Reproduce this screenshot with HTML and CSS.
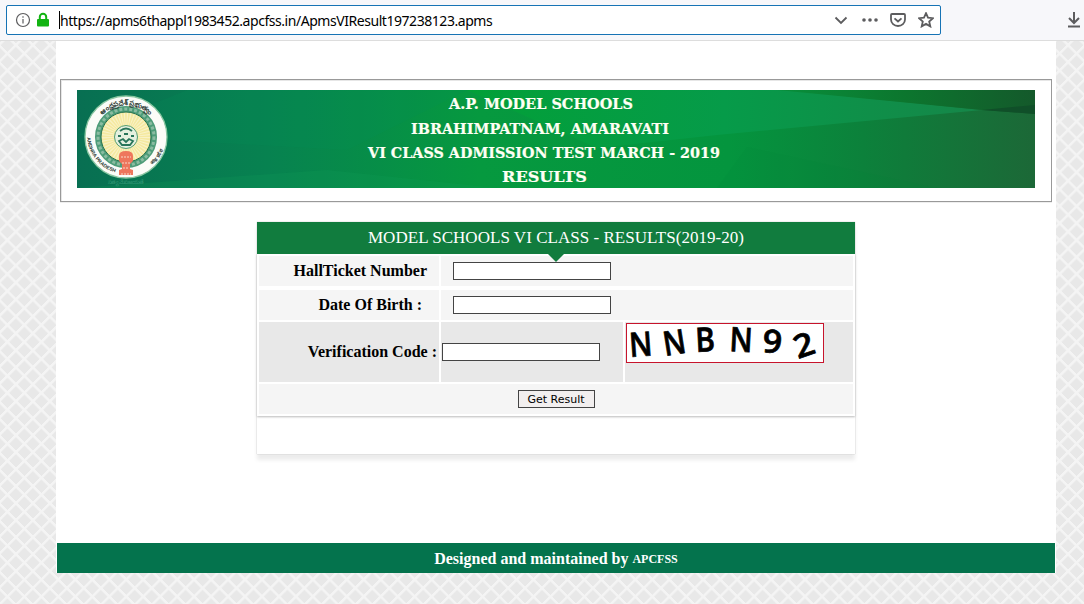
FILE: index.html
```html
<!DOCTYPE html>
<html lang="en">
<head>
<meta charset="utf-8">
<title>Model Schools Results</title>
<link rel="stylesheet" href="styles.css">
</head>
<body>
<header class="toolbar">
  <div class="address">
    <svg class="icon info" viewBox="0 0 16 16"><circle cx="8" cy="8" r="6.5"/><path d="M8 7v4.5M8 4.2v1.6"/></svg>
    <svg class="icon lock" viewBox="0 0 16 16"><path class="shackle" d="M4.8 8V5a3.2 3.2 0 0 1 6.4 0v3"/><rect x="2" y="7" width="12" height="7.6" rx="1"/></svg>
    <span class="caret"></span>
    <span class="url">https://apms6thappl1983452.apcfss.in/ApmsVIResult197238123.apms</span>
    <span class="actions">
      <svg class="icon" viewBox="0 0 16 16"><path d="M1.500 5.500 7 11l5.500-5.500"/></svg>
      <svg class="icon dots" viewBox="0 0 16 16"><circle cx="2" cy="8" r="1.800"/><circle cx="8" cy="8" r="1.800"/><circle cx="14" cy="8" r="1.800"/></svg>
      <svg class="icon" viewBox="0 0 16 16"><path d="M2 2h12q1 0 1 1v4.500a7 6.500 0 0 1-14 0V3q0-1 1-1zM4.500 6.300 8 9.500l3.500-3.200"/></svg>
      <svg class="icon" viewBox="0 0 16 16"><path d="m8 1.200 2 4.500 4.900.5-3.700 3.300 1.100 4.900L8 11.900l-4.300 2.500 1.100-4.900L1.100 6.200 6 5.700z"/></svg>
    </span>
  </div>
  <svg class="icon download" viewBox="0 0 16 16"><path d="M8 0v10.500M3 6l5 5 5-5M2 14.500h12"/></svg>
</header>
<main class="page">
  <div class="frame">
    <div class="banner">
      <svg class="facets" viewBox="0 0 958 98" preserveAspectRatio="none">
        <defs>
          <linearGradient id="base"><stop offset="0" stop-color="#086f52"/><stop offset=".2" stop-color="#078250"/><stop offset=".42" stop-color="#06993f"/><stop offset=".68" stop-color="#04953e"/><stop offset=".82" stop-color="#0c813b"/><stop offset="1" stop-color="#1c6837"/></linearGradient>
          <linearGradient id="light"><stop offset="0" stop-color="#02a038"/><stop offset=".5" stop-color="#069b49"/><stop offset="1" stop-color="#168649"/></linearGradient>
          <linearGradient id="dark"><stop offset="0" stop-color="#088f3b"/><stop offset=".5" stop-color="#0c762e"/><stop offset="1" stop-color="#14592b"/></linearGradient>
        </defs>
        <rect width="958" height="98" fill="url(#base)"/>
        <path d="M390 0H710L905 20 640 45 520 58z" fill="url(#light)"/>
        <path d="M700 0H958V24L905 20z" fill="url(#dark)"/>
        <path d="M905 20 958 15v9z" fill="#104f29"/>
        <path d="M0 45 270 60 390 0H110z" fill="#03925b" opacity=".18"/>
        <path d="M0 98 250 80 420 98z" fill="#16a05b" opacity=".2"/>
        <path d="M670 57 860 98H640z" fill="#03803a" opacity=".12"/>
      </svg>
      <svg class="seal" viewBox="0 0 84 96">
        <defs>
          <path id="arcTop" d="M9 43a33 33 0 0 1 66 0"/>
          <path id="arcLeft" d="M3 41a39 39 0 0 0 31 37"/>
          <path id="arcRight" d="M61 75a37 37 0 0 0 20-36"/>
        </defs>
        <circle cx="42" cy="42" r="41" fill="#fbfcf8" stroke="#89c6a1" stroke-width="1.300"/>
        <circle cx="42" cy="42" r="28" fill="#edf3df" stroke="#4d9c78" stroke-width="6"/>
        <circle cx="42" cy="42" r="28" fill="none" stroke="#8abca1" stroke-width="3" stroke-dasharray="3 2"/>
        <circle cx="42" cy="42" r="25" fill="#f5e9a0" stroke="#206e4d"/>
        <circle cx="42" cy="42" r="18" fill="none" stroke="#f9f2c8" stroke-width="12" stroke-dasharray="1 1.500"/>
        <circle cx="42" cy="42" r="11.500" fill="#e5f0df" stroke="#549d73"/>
        <path d="M36 36q6-5 12 0M34 41h3m3-2h4m3 2h3M35 46l4-2 3 3 3-3 4 2-3 4h-8z" fill="none" stroke="#28755a" stroke-width="1.800"/>
        <path d="M35 61q0-5 7-5t7 5v5l-3 3v5l3 1v5H35v-5l3-1v-5l-3-3z" fill="#ee765c"/>
        <path d="M37 62h10M38 68h8M39 73h6M37 79h10" stroke="#f8d9c7" stroke-width="1" stroke-dasharray="2 1"/>
        <text class="telugu"><textPath href="#arcTop" startOffset="24%" textLength="54">ఆంధ్రప్రదేశ్ ప్రభుత్వం</textPath></text>
        <text class="latin"><textPath href="#arcLeft" startOffset="3%">ANDHRA PRADESH</textPath></text>
        <text class="latin"><textPath href="#arcRight" startOffset="20%">आंध्र प्रदेश</textPath></text>
        <text class="motto" x="24" y="89" textLength="36">సత్యమేవ జయతే</text>
      </svg>
      <svg class="titles" viewBox="0 0 958 98">
        <text x="372" y="19" textLength="184" lengthAdjust="spacingAndGlyphs">A.P. MODEL SCHOOLS</text>
        <text x="334" y="44" textLength="258" lengthAdjust="spacingAndGlyphs">IBRAHIMPATNAM, AMARAVATI</text>
        <text x="291" y="68" textLength="352" lengthAdjust="spacingAndGlyphs">VI CLASS ADMISSION TEST MARCH - 2019</text>
        <text x="425" y="92" textLength="85" lengthAdjust="spacingAndGlyphs">RESULTS</text>
      </svg>
    </div>
  </div>
  <section class="card">
    <h1 class="card-title">MODEL SCHOOLS VI CLASS - RESULTS(2019-20)</h1>
    <form class="form">
      <label class="cell name first hall">HallTicket Number</label>
      <div class="cell wide first inset"><input class="field" type="text"></div>
      <label class="cell name birth">Date Of Birth :</label>
      <div class="cell wide inset"><input class="field" type="text"></div>
      <label class="cell name shade">Verification Code :</label>
      <div class="cell shade answer"><input class="field" type="text"></div>
      <div class="cell shade code">
        <svg class="captcha" viewBox="0 0 196 38">
          <text transform="translate(3 33) rotate(-4) scale(.92 1.050)">N</text>
          <text transform="translate(38 32) rotate(-9) scale(.9 1.050)">N</text>
          <text transform="translate(69 28) rotate(-3) scale(.92 1.050)">B</text>
          <text transform="translate(102 27) rotate(3) scale(.92 1.050)">N</text>
          <text transform="translate(135 28) rotate(4) scale(1.060 1)">9</text>
          <text transform="translate(171 35) rotate(-19) scale(1.100 1)">2</text>
        </svg>
      </div>
      <div class="cell full"><button class="submit" type="button">Get Result</button></div>
    </form>
  </section>
  <footer class="footer"><span class="credit">Designed and maintained by</span><span class="owner">APCFSS</span></footer>
</main>
</body>
</html>
```
FILE: styles.css
```css
* { box-sizing: border-box; }
body {
  margin: 0;
  height: 604px;
  overflow: hidden;
  font-family: "Liberation Serif", serif;
  color: #000;
  background-color: #e8e8e8;
  background-image:
    repeating-linear-gradient(45deg, transparent 0 8.500px, #f4f4f4 10px 11.500px, transparent 12px),
    repeating-linear-gradient(-45deg, transparent 0 8.500px, #f4f4f4 10px 11.500px, transparent 12px);
}
.toolbar {
  height: 41px;
  padding: 5px 0 0 6px;
  display: flex;
  background: #f7f7fa;
  border-bottom: 1px solid #ddd;
}
.address {
  width: 935px;
  height: 30px;
  border: 1px solid #1673b5;
  border-radius: 2px;
  background: #fff;
  display: flex;
  align-items: center;
  padding: 0 6px 0 8px;
}
.icon {
  width: 16px;
  height: 16px;
  flex: none;
  fill: none;
  stroke: #5c5c5e;
  stroke-width: 1.800;
}
.info { stroke-width: 1.200; }
.lock { margin-left: 4px; fill: #12b312; stroke: none; }
.shackle { fill: none; stroke: #12b312; stroke-width: 2; }
.dots { fill: #5c5c5e; stroke: none; }
.caret { width: 1px; height: 18px; margin-left: 8px; background: #000; }
.url {
  width: 433px;
  padding-top: 2px;
  white-space: nowrap;
  font: 14px/18px "Noto Sans", sans-serif;
  letter-spacing: -0.450px;
}
.actions { display: flex; gap: 12px; margin-left: auto; }
.download { margin: 7px 0 0 125px; stroke-width: 2; }
.page {
  width: 1000px;
  height: 533px;
  margin-left: 56px;
  padding: 38px 1px 0 4px;
  background: linear-gradient(#fff, #fff) 0 0 / 100% 532px no-repeat;
}
.frame {
  width: 992px;
  height: 123px;
  border: 1px solid #999;
  box-shadow: inset 1px 1px #e6e6e6, 0 1px #eee;
  padding: 10px 16px;
}
.banner { width: 958px; height: 98px; display: grid; }
.facets, .titles, .seal { grid-area: 1 / 1; }
.facets, .titles { width: 958px; height: 98px; }
.titles {
  fill: #fffff4;
  stroke: #fffff4;
  stroke-width: 0.200;
  font: bold 15px "DejaVu Serif", serif;
  z-index: 1;
  overflow: visible;
}
.seal { width: 84px; height: 96px; margin: 5px 0 0 7px; z-index: 1; overflow: visible; }
.telugu { font: bold 7px "Noto Sans", sans-serif; fill: #303c37; }
.latin { font: bold 5px "Liberation Sans", sans-serif; fill: #303c37; }
.motto { font: 6px "Noto Sans", sans-serif; fill: #2d9671; }
.card {
  width: 598px;
  height: 232px;
  margin: 20px 0 0 197px;
  box-shadow: 0 0 1px #aaa, 0 6px 4px #ececec;
}
.card-title {
  height: 32px;
  margin: 0;
  color: #fff;
  background: #117c3e;
  font-size: 17px;
  letter-spacing: 0.030px;
  line-height: 32px;
  font-weight: normal;
  text-align: center;
  position: relative;
}
.card-title::after {
  content: "";
  position: absolute;
  left: 290px;
  top: 31px;
  border: 9px solid transparent;
  border-top-color: #117c3e;
  border-bottom: 0;
}
.form {
  height: 162px;
  display: grid;
  grid-template-columns: 180px 182px 228px;
  grid-template-rows: 32px 30px 60px 30px;
  gap: 2px;
  padding: 2px;
  box-shadow: 0 1px 2px #bbb;
}
.cell { background: #f5f5f5; display: flex; align-items: center; }
.first { margin-bottom: 2px; }
.name { justify-content: flex-end; font-weight: bold; font-size: 16px; padding-right: 2px; }
.hall { padding-right: 12px; }
.birth { padding-right: 17px; }
.wide { grid-column: 2 / 4; }
.inset { padding-left: 12px; }
.shade { background: #e8e8e8; }
.answer { padding-left: 1px; }
.field { width: 158px; height: 18px; border: 1px solid #444; background: #fff; padding: 0; }
.inset .field { margin-bottom: 1px; }
.code { align-items: flex-start; padding: 1px; }
.captcha {
  width: 198px;
  height: 40px;
  overflow: visible;
  background: #fff;
  border: 1px solid #c7142c;
  stroke: #000;
  stroke-width: 0.700;
  font: 600 32px "Open Sans", sans-serif;
}
.full { grid-column: 1 / 4; justify-content: center; }
.submit {
  width: 77px;
  height: 18px;
  border: 1px solid #444;
  background: #f2efef;
  padding: 0;
  font: 11px "DejaVu Sans", sans-serif;
}
.footer {
  width: 998px;
  height: 30px;
  margin: 89px 0 0 -3px;
  padding-top: 2px;
  display: flex;
  justify-content: center;
  align-items: center;
  gap: 4px;
  background: #04734d;
  color: #fff;
  font-weight: bold;
}
.credit { font-size: 16px; }
.owner { font-size: 12px; }
```
